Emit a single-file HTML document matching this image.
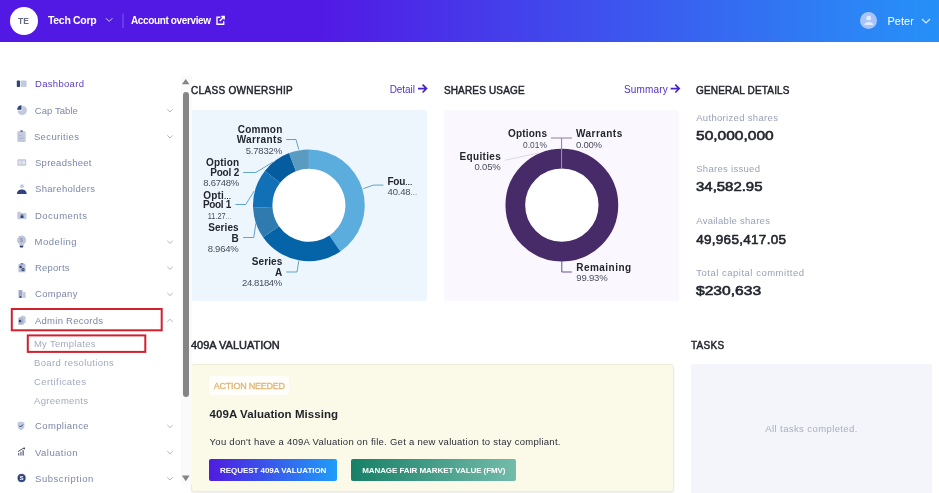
<!DOCTYPE html>
<html lang="en">
<head>
<meta charset="utf-8">
<title>Dashboard</title>
<style>
html,body{margin:0;padding:0;}
body{will-change:transform;width:939px;height:493px;overflow:hidden;background:#fff;font-family:"Liberation Sans",sans-serif;position:relative;}
.t{position:absolute;white-space:nowrap;}
.e{font-size:.75em;letter-spacing:0;}
.abs{position:absolute;}
#hdr{left:0;top:0;width:939px;height:41.7px;background:linear-gradient(90deg,#5219e5 0%,#5219e5 34%,#2c84f5 91%,#2590f7 100%);}
#av{left:9.5px;top:6.5px;width:28.5px;height:28.5px;border-radius:50%;background:#fff;}
#uav{left:860.1px;top:12.1px;width:17.4px;height:17.4px;border-radius:50%;background:#a9c4f8;}
.card{position:absolute;border-radius:3px;}
svg{position:absolute;left:0;top:0;overflow:visible;}
</style>
</head>
<body>
<div id="hdr" class="abs"></div>
<div id="av" class="abs"></div>
<div id="uav" class="abs"></div>
<!-- cards -->
<div class="card" style="left:191px;top:109.6px;width:236px;height:191px;background:#eef6fd;"></div>
<div class="card" style="left:444px;top:109.6px;width:235px;height:191px;background:#faf8fe;"></div>
<div class="card" style="left:190.7px;top:364.2px;width:483px;height:127.4px;background:#fbf9e7;border:1px solid #efedd8;box-sizing:border-box;box-shadow:0 1px 2px rgba(0,0,0,.08);"></div>
<div class="card" style="left:690.9px;top:364.4px;width:241px;height:140px;background:#f4f5fa;"></div>
<div class="abs" style="left:209.3px;top:376.4px;width:80.2px;height:18.8px;background:#fffefa;border-radius:3px;"></div>
<div class="abs" style="left:209.4px;top:459.4px;width:127.6px;height:21.3px;border-radius:2px;background:linear-gradient(90deg,#4f1ce0,#1f9df9);"></div>
<div class="abs" style="left:350.8px;top:459.4px;width:165.6px;height:21.3px;border-radius:2px;background:linear-gradient(90deg,#188068,#73bbaa);"></div>
<!-- red highlight boxes -->
<!-- scrollbar -->
<div class="abs" style="left:180.5px;top:75.5px;width:11px;height:408.5px;background:#fafafa;"></div>
<div class="abs" style="left:182.7px;top:91.9px;width:6.2px;height:305px;border-radius:3.1px;background:#858585;"></div>
<svg width="939" height="493" viewBox="0 0 939 493">
<!-- scrollbar arrows -->
<path d="M181.9 84.2 L189.5 84.2 L185.7 78.9 Z" fill="#858585"/>
<path d="M181.9 475.6 L189.6 475.6 L185.75 481.2 Z" fill="#858585"/>
<!-- header icons -->
<path d="M106 18.2 L109.2 21.4 L112.4 18.2" fill="none" stroke="#d4ccf6" stroke-width="1"/>
<path d="M123 13.5 V28" stroke="#7a5ce8" stroke-width="1"/>
<path d="M922 19 L926 23 L930 19" fill="none" stroke="#e0ecff" stroke-width="1.1"/>
<g fill="none" stroke="#fff" stroke-width="1.35"><path d="M220.3 17.2 H217 V24.2 H223.7 V21.2"/><path d="M219.8 21 L224 16.7 M221.3 16.5 H224.2 V19.4"/></g>
<circle cx="868.75" cy="18.2" r="2.4" fill="#e4ecfc"/><path d="M864.3 25 C864.3 21 873.2 21 873.2 25 Z" fill="#e4ecfc"/>
<!-- arrows -->
<g fill="none" stroke="#4a22cc" stroke-width="1.7"><path d="M418 88.6 H426.3 M422.6 84.7 L426.5 88.6 L422.6 92.5"/><path d="M670.6 88.6 H679 M675.3 84.7 L679.2 88.6 L675.3 92.5"/></g>
<g fill="none" stroke="#d0212f" stroke-width="2"><rect x="11.8" y="309" width="149.9" height="21.3"/><rect x="27.8" y="335.4" width="117.5" height="16.5"/></g>
<circle cx="308.9" cy="205.3" r="36.8" fill="#fff"/>
<path d="M308.90 149.40 A55.9 55.9 0 0 1 340.37 251.50 L329.45 235.47 A36.5 36.5 0 0 0 308.90 168.80 Z" fill="#5badde"/>
<path d="M340.37 251.50 A55.9 55.9 0 0 1 263.06 237.29 L278.97 226.18 A36.5 36.5 0 0 0 329.45 235.47 Z" fill="#0563a8"/>
<path d="M263.06 237.29 A55.9 55.9 0 0 1 253.06 207.86 L272.44 206.97 A36.5 36.5 0 0 0 278.97 226.18 Z" fill="#2f7bb0"/>
<path d="M253.06 207.86 A55.9 55.9 0 0 1 264.82 170.93 L280.12 182.86 A36.5 36.5 0 0 0 272.44 206.97 Z" fill="#1170b6"/>
<path d="M264.82 170.93 A55.9 55.9 0 0 1 289.03 153.05 L295.93 171.18 A36.5 36.5 0 0 0 280.12 182.86 Z" fill="#055c9f"/>
<path d="M289.03 153.05 A55.9 55.9 0 0 1 308.90 149.40 L308.90 168.80 A36.5 36.5 0 0 0 295.93 171.18 Z" fill="#5a9bc1"/>
<g stroke="#5fa3c7" stroke-width="1" fill="none"><path d="M286.2 139.5 H296 L298.8 149.5"/><path d="M243.2 172.5 H255.8 L273 162"/><path d="M235.5 204.5 H245.7 L254.2 191"/><path d="M243.2 237.5 H253.8 L255.8 223.4"/><path d="M286.2 272 H297 L298.8 260.9"/><path d="M383.3 185.1 H373.4 L363.4 188.6"/></g>
<circle cx="561.85" cy="205.1" r="46.55" fill="#fff" stroke="#472a68" stroke-width="19.699999999999996"/>
<path d="M551 138 H572 M561.6 138 V149" stroke="#8f7aa6" stroke-width="1" fill="none"/>
<path d="M561.6 149 V168.5" stroke="#a792bd" stroke-width="1" fill="none"/>
<path d="M504.6 160.3 L539.2 152.9" stroke="#ded6ea" stroke-width="1" fill="none"/>
<path d="M561.8 261 V272 H571.8" stroke="#6a5190" stroke-width="1" fill="none"/>
<rect x="16.8" y="80.6" width="3.2" height="6.4" rx="0.7" fill="#30437a"/><rect x="20.6" y="80.6" width="6" height="6.4" rx="0.7" fill="#c4cadd"/>
<path d="M22.2 110.4 V105.7 A4.7 4.7 0 1 1 17.5 110.4 Z" fill="#c4cadd"/><path d="M21.5 109.7 V105.3 A4.4 4.4 0 0 0 17.1 109.7 Z" fill="#30437a"/>
<rect x="17.3" y="131.3" width="8.4" height="10.6" rx="1" fill="#c4cadd"/><rect x="20.3" y="130.3" width="2.6" height="1.8" rx="0.5" fill="#6b7699"/><path d="M19 135.5 H21.5 M19 138.3 H23.5" stroke="#aab1c9" stroke-width="0.8"/>
<rect x="17.4" y="159.2" width="8.8" height="6.6" rx="0.9" fill="#c0c6d9"/><rect x="18.5" y="160.6" width="2.8" height="3.9" fill="#e1e4ee"/><rect x="22.2" y="160.6" width="2.9" height="3.9" fill="#e1e4ee"/>
<circle cx="22" cy="186.2" r="1.9" fill="#c4cadd"/><path d="M16.9 193.9 C16.9 188 26.7 188 26.7 193.9 Z" fill="#30437a"/>
<path d="M17.3 212.6 Q17.3 211.8 18.1 211.8 H20.3 L21.3 213 H25.7 Q26.5 213 26.5 213.8 V218.4 Q26.5 219.2 25.7 219.2 H18.1 Q17.3 219.2 17.3 218.4 Z" fill="#c4cadd"/><rect x="20.5" y="215.6" width="3" height="2.4" rx="0.4" fill="#30437a"/><path d="M21.2 215.8 V215.2 A0.8 0.8 0 0 1 22.8 215.2 V215.8" stroke="#30437a" stroke-width="0.6" fill="none"/>
<path d="M21.6 235.6 A4.6 4.6 0 0 1 24.6 243.6 Q23.8 244.3 23.8 245.2 H19.4 Q19.4 244.3 18.6 243.6 A4.6 4.6 0 0 1 21.6 235.6 Z" fill="#c0c6da"/><rect x="19.6" y="245.6" width="3.8" height="1.8" rx="0.8" fill="#30437a"/>
<text x="21.5" y="242.3" font-size="6" font-weight="700" text-anchor="middle" fill="#8c94b2" font-family="Liberation Sans, sans-serif">$</text>
<rect x="18.5" y="263.8" width="7" height="8.4" rx="0.8" fill="#b9bfd6"/><rect x="20.6" y="263" width="2.8" height="1.6" rx="0.5" fill="#7a84a6"/><rect x="19.5" y="265.8" width="2.2" height="2.2" fill="#30437a"/><circle cx="23" cy="269.6" r="1.6" fill="#30437a"/><circle cx="23" cy="269.6" r="0.6" fill="#b9bfd6"/>
<rect x="18.5" y="290" width="4" height="7.9" fill="#aab1cb"/><rect x="22.9" y="292.1" width="2.8" height="5.8" fill="#c4cadd"/><rect x="19.7" y="296.1" width="1.6" height="1.8" fill="#30437a"/><path d="M19.7 291 V295.4 M21.3 291 V295.4" stroke="#8d96b5" stroke-width="0.6"/>
<path d="M20.6 315.8 H24.3 L25.7 317.2 V323.2 H20.6 Z" fill="#c4cadd"/><path d="M18.3 317.6 H22.4 L23.6 318.8 V324.7 H18.3 Z" fill="#aeb5cd"/><rect x="18.9" y="319.9" width="2.3" height="2.3" fill="#3a4b7f"/>
<path d="M21 421.4 L24.4 422.6 V426 Q24.4 429 21 430.4 Q17.6 429 17.6 426 V422.6 Z" fill="#c4cadd"/><path d="M19.3 425.7 L20.6 427 L22.9 424.5" stroke="#30437a" stroke-width="1" fill="none"/>
<g fill="#7b8194"><rect x="18" y="453" width="1.4" height="2.6"/><rect x="20.2" y="451.6" width="1.4" height="4"/><rect x="22.4" y="450.2" width="1.6" height="5.4"/></g><path d="M17.9 451.8 L21 449.6 L24.6 448" stroke="#3d4356" stroke-width="0.9" fill="none"/><path d="M22.9 447.7 H25 V449.8 Z" fill="#3d4356"/>
<circle cx="21.6" cy="478" r="4.5" fill="#c4cadd"/><circle cx="21.6" cy="478" r="3.9" fill="#30437a"/><text x="21.6" y="480.3" font-size="6.2" font-weight="700" text-anchor="middle" fill="#fff" font-family="Liberation Sans, sans-serif">S</text>
<g fill="none" stroke="#a7aec2" stroke-width="0.9"><path d="M167.3 109.3 L170 111.9 L172.7 109.3"/><path d="M167.3 135.4 L170 138.0 L172.7 135.4"/><path d="M167.3 240.8 L170 243.4 L172.7 240.8"/><path d="M167.3 266.8 L170 269.4 L172.7 266.8"/><path d="M167.3 293.0 L170 295.59999999999997 L172.7 293.0"/><path d="M167.3 425.0 L170 427.59999999999997 L172.7 425.0"/><path d="M167.3 451.2 L170 453.79999999999995 L172.7 451.2"/><path d="M167.3 477.40000000000003 L170 480.0 L172.7 477.40000000000003"/><path d="M167.3 321.90000000000003 L170 319.20000000000005 L172.7 321.90000000000003"/></g>
</svg>
<span class="t" id="t0" style="transform:scaleX(0.9465);transform-origin:left center;left:18.0px;top:15px;font-size:9px;line-height:12px;font-weight:700;color:#666b82;letter-spacing:0.00px;">TE</span>
<span class="t" id="t1" style="left:48.0px;top:13px;font-size:10.5px;line-height:14px;font-weight:700;color:#fff;letter-spacing:-0.31px;">Tech Corp</span>
<span class="t" id="t2" style="left:131.0px;top:14px;font-size:10px;line-height:13px;font-weight:700;color:#fff;letter-spacing:-0.37px;">Account overview</span>
<span class="t" id="t3" style="left:887.5px;top:14px;font-size:11px;line-height:14px;font-weight:400;color:#fff;letter-spacing:0.00px;">Peter</span>
<span class="t" id="t4" style="left:35.0px;top:77px;font-size:9.5px;line-height:13px;font-weight:400;color:#5b3cc4;letter-spacing:0.31px;">Dashboard</span>
<span class="t" id="t5" style="left:34.8px;top:104px;font-size:9.5px;line-height:13px;font-weight:400;color:#7d88a8;letter-spacing:0.06px;">Cap Table</span>
<span class="t" id="t6" style="left:33.9px;top:130px;font-size:9.5px;line-height:13px;font-weight:400;color:#7d88a8;letter-spacing:0.38px;">Securities</span>
<span class="t" id="t7" style="left:35.0px;top:156px;font-size:9.5px;line-height:13px;font-weight:400;color:#7d88a8;letter-spacing:0.26px;">Spreadsheet</span>
<span class="t" id="t8" style="left:35.0px;top:182px;font-size:9.5px;line-height:13px;font-weight:400;color:#7d88a8;letter-spacing:0.31px;">Shareholders</span>
<span class="t" id="t9" style="left:35.0px;top:209px;font-size:9.5px;line-height:13px;font-weight:400;color:#7d88a8;letter-spacing:0.49px;">Documents</span>
<span class="t" id="t10" style="left:34.6px;top:235px;font-size:9.5px;line-height:13px;font-weight:400;color:#7d88a8;letter-spacing:0.49px;">Modeling</span>
<span class="t" id="t11" style="left:35.0px;top:261px;font-size:9.5px;line-height:13px;font-weight:400;color:#7d88a8;letter-spacing:0.22px;">Reports</span>
<span class="t" id="t12" style="left:35.0px;top:287px;font-size:9.5px;line-height:13px;font-weight:400;color:#7d88a8;letter-spacing:0.30px;">Company</span>
<span class="t" id="t13" style="left:35.0px;top:314px;font-size:9.5px;line-height:13px;font-weight:400;color:#7d88a8;letter-spacing:0.25px;">Admin Records</span>
<span class="t" id="t14" style="left:35.0px;top:419px;font-size:9.5px;line-height:13px;font-weight:400;color:#7d88a8;letter-spacing:0.38px;">Compliance</span>
<span class="t" id="t15" style="left:35.0px;top:446px;font-size:9.5px;line-height:13px;font-weight:400;color:#7d88a8;letter-spacing:0.45px;">Valuation</span>
<span class="t" id="t16" style="left:35.0px;top:472px;font-size:9.5px;line-height:13px;font-weight:400;color:#7d88a8;letter-spacing:0.55px;">Subscription</span>
<span class="t" id="t17" style="left:33.9px;top:337px;font-size:9.5px;line-height:13px;font-weight:400;color:#a3abbf;letter-spacing:0.29px;">My Templates</span>
<span class="t" id="t18" style="left:34.0px;top:356px;font-size:9.5px;line-height:13px;font-weight:400;color:#a3abbf;letter-spacing:0.37px;">Board resolutions</span>
<span class="t" id="t19" style="left:34.0px;top:375px;font-size:9.5px;line-height:13px;font-weight:400;color:#a3abbf;letter-spacing:0.41px;">Certificates</span>
<span class="t" id="t20" style="left:34.0px;top:394px;font-size:9.5px;line-height:13px;font-weight:400;color:#a3abbf;letter-spacing:0.31px;">Agreements</span>
<span class="t" id="t21" style="left:191.0px;top:84px;font-size:10px;line-height:13px;font-weight:400;color:#23262f;letter-spacing:0.32px;-webkit-text-stroke:0.45px #23262f;">CLASS OWNERSHIP</span>
<span class="t" id="t22" style="left:443.9px;top:84px;font-size:10px;line-height:13px;font-weight:400;color:#23262f;letter-spacing:0.17px;-webkit-text-stroke:0.45px #23262f;">SHARES USAGE</span>
<span class="t" id="t23" style="left:696.0px;top:84px;font-size:10px;line-height:13px;font-weight:400;color:#23262f;letter-spacing:0.17px;-webkit-text-stroke:0.45px #23262f;">GENERAL DETAILS</span>
<span class="t" id="t24" style="transform:scaleX(1.0980);transform-origin:left center;left:191.0px;top:339px;font-size:10px;line-height:13px;font-weight:400;color:#23262f;letter-spacing:0.00px;-webkit-text-stroke:0.45px #23262f;">409A VALUATION</span>
<span class="t" id="t25" style="left:690.9px;top:339px;font-size:10px;line-height:13px;font-weight:400;color:#23262f;letter-spacing:0.31px;-webkit-text-stroke:0.45px #23262f;">TASKS</span>
<span class="t" id="t26" style="left:389.7px;top:83px;font-size:10px;line-height:13px;font-weight:400;color:#5430cf;letter-spacing:-0.06px;">Detail</span>
<span class="t" id="t27" style="left:623.9px;top:83px;font-size:10px;line-height:13px;font-weight:400;color:#5430cf;letter-spacing:0.17px;">Summary</span>
<span class="t" id="t28" style="left:696.2px;top:111px;font-size:9.5px;line-height:13px;font-weight:400;color:#98a1b8;letter-spacing:0.32px;">Authorized shares</span>
<span class="t" id="t29" style="transform:scaleX(1.1498);transform-origin:left center;left:696.2px;top:127px;font-size:13.5px;line-height:17px;font-weight:400;color:#23262f;letter-spacing:0.00px;-webkit-text-stroke:0.6px #23262f;">50,000,000</span>
<span class="t" id="t30" style="left:696.2px;top:162px;font-size:9.5px;line-height:13px;font-weight:400;color:#98a1b8;letter-spacing:0.30px;">Shares issued</span>
<span class="t" id="t31" style="transform:scaleX(1.1072);transform-origin:left center;left:696.2px;top:178px;font-size:13.5px;line-height:17px;font-weight:400;color:#23262f;letter-spacing:0.00px;-webkit-text-stroke:0.6px #23262f;">34,582.95</span>
<span class="t" id="t32" style="left:696.2px;top:214px;font-size:9.5px;line-height:13px;font-weight:400;color:#98a1b8;letter-spacing:0.28px;">Available shares</span>
<span class="t" id="t33" style="left:696.2px;top:231px;font-size:13.5px;line-height:17px;font-weight:400;color:#23262f;letter-spacing:0.29px;-webkit-text-stroke:0.6px #23262f;">49,965,417.05</span>
<span class="t" id="t34" style="left:696.2px;top:266px;font-size:9.5px;line-height:13px;font-weight:400;color:#98a1b8;letter-spacing:0.51px;">Total capital committed</span>
<span class="t" id="t35" style="transform:scaleX(1.1560);transform-origin:left center;left:696.2px;top:282px;font-size:13.5px;line-height:17px;font-weight:400;color:#23262f;letter-spacing:0.00px;-webkit-text-stroke:0.6px #23262f;">$230,633</span>
<span class="t" id="t36" style="right:656.5px;top:123px;font-size:10px;line-height:13px;font-weight:700;color:#23262f;letter-spacing:0.25px;">Common</span>
<span class="t" id="t37" style="right:656.4px;top:133px;font-size:10px;line-height:13px;font-weight:700;color:#23262f;letter-spacing:0.37px;">Warrants</span>
<span class="t" id="t38" style="right:657.0px;top:144px;font-size:9.5px;line-height:13px;font-weight:400;color:#484d5d;letter-spacing:-0.17px;">5.7832%</span>
<span class="t" id="t39" style="right:699.6px;top:156px;font-size:10px;line-height:13px;font-weight:700;color:#23262f;letter-spacing:0.18px;">Option</span>
<span class="t" id="t40" style="right:700.0px;top:166px;font-size:10px;line-height:13px;font-weight:700;color:#23262f;letter-spacing:-0.20px;">Pool 2</span>
<span class="t" id="t41" style="right:700.0px;top:176px;font-size:9.5px;line-height:13px;font-weight:400;color:#484d5d;letter-spacing:-0.25px;">8.6748%</span>
<span class="t" id="t42" style="right:707.7px;top:189px;font-size:10px;line-height:13px;font-weight:700;color:#23262f;letter-spacing:0.12px;">Opti<span class="e">…</span></span>
<span class="t" id="t43" style="right:708.1px;top:198px;font-size:10px;line-height:13px;font-weight:700;color:#23262f;letter-spacing:-0.34px;">Pool 1</span>
<span class="t" id="t44" style="transform:scaleX(0.7785);transform-origin:right center;right:707.8px;top:209px;font-size:9.5px;line-height:13px;font-weight:400;color:#484d5d;letter-spacing:0.00px;">11.27<span class="e">…</span></span>
<span class="t" id="t45" style="right:700.3px;top:221px;font-size:10px;line-height:13px;font-weight:700;color:#23262f;letter-spacing:0.07px;">Series</span>
<span class="t" id="t46" style="right:700.4px;top:232px;font-size:10px;line-height:13px;font-weight:700;color:#23262f;letter-spacing:0.00px;">B</span>
<span class="t" id="t47" style="right:700.6px;top:242px;font-size:9.5px;line-height:13px;font-weight:400;color:#484d5d;letter-spacing:-0.25px;">8.964%</span>
<span class="t" id="t48" style="right:656.7px;top:255px;font-size:10px;line-height:13px;font-weight:700;color:#23262f;letter-spacing:0.07px;">Series</span>
<span class="t" id="t49" style="right:656.8px;top:266px;font-size:10px;line-height:13px;font-weight:700;color:#23262f;letter-spacing:0.00px;">A</span>
<span class="t" id="t50" style="right:657.2px;top:276px;font-size:9.5px;line-height:13px;font-weight:400;color:#484d5d;letter-spacing:-0.37px;">24.8184%</span>
<span class="t" id="t51" style="left:387.6px;top:175px;font-size:10px;line-height:13px;font-weight:700;color:#23262f;letter-spacing:-0.34px;">Fou<span class="e">…</span></span>
<span class="t" id="t52" style="left:387.6px;top:185px;font-size:9.5px;line-height:13px;font-weight:400;color:#484d5d;letter-spacing:-0.22px;">40.48<span class="e">…</span></span>
<span class="t" id="t53" style="right:391.8px;top:127px;font-size:10px;line-height:13px;font-weight:700;color:#23262f;letter-spacing:0.20px;">Options</span>
<span class="t" id="t54" style="transform:scaleX(0.8872);transform-origin:right center;right:392.0px;top:138px;font-size:9.5px;line-height:13px;font-weight:400;color:#484d5d;letter-spacing:0.00px;">0.01%</span>
<span class="t" id="t55" style="left:576.0px;top:127px;font-size:10px;line-height:13px;font-weight:700;color:#23262f;letter-spacing:0.46px;">Warrants</span>
<span class="t" id="t56" style="left:576.0px;top:138px;font-size:9.5px;line-height:13px;font-weight:400;color:#484d5d;letter-spacing:-0.23px;">0.00%</span>
<span class="t" id="t57" style="right:437.8px;top:150px;font-size:10px;line-height:13px;font-weight:700;color:#23262f;letter-spacing:0.36px;">Equities</span>
<span class="t" id="t58" style="right:438.4px;top:160px;font-size:9.5px;line-height:13px;font-weight:400;color:#484d5d;letter-spacing:-0.16px;">0.05%</span>
<span class="t" id="t59" style="left:576.3px;top:261px;font-size:10px;line-height:13px;font-weight:700;color:#23262f;letter-spacing:0.46px;">Remaining</span>
<span class="t" id="t60" style="left:576.3px;top:271px;font-size:9.5px;line-height:13px;font-weight:400;color:#484d5d;letter-spacing:-0.17px;">99.93%</span>
<span class="t" id="t61" style="left:213.8px;top:380px;font-size:9px;line-height:12px;font-weight:400;color:#e3b470;letter-spacing:-0.23px;-webkit-text-stroke:0.3px #e3b470;">ACTION NEEDED</span>
<span class="t" id="t62" style="left:209.6px;top:407px;font-size:11.5px;line-height:14px;font-weight:700;color:#1f222b;letter-spacing:0.05px;">409A Valuation Missing</span>
<span class="t" id="t63" style="left:209.6px;top:435px;font-size:9.5px;line-height:13px;font-weight:400;color:#2a2d38;letter-spacing:0.27px;">You don&#x27;t have a 409A Valuation on file. Get a new valuation to stay compliant.</span>
<span class="t" id="t64" style="left:220.0px;top:465px;font-size:8px;line-height:11px;font-weight:700;color:#fff;letter-spacing:-0.05px;">REQUEST 409A VALUATION</span>
<span class="t" id="t65" style="left:362.2px;top:465px;font-size:8px;line-height:11px;font-weight:700;color:#fff;letter-spacing:-0.08px;">MANAGE FAIR MARKET VALUE (FMV)</span>
<span class="t" id="t66" style="left:765.3px;top:422px;font-size:9.5px;line-height:13px;font-weight:400;color:#a6aec2;letter-spacing:0.40px;">All tasks completed.</span>
</body>
</html>
